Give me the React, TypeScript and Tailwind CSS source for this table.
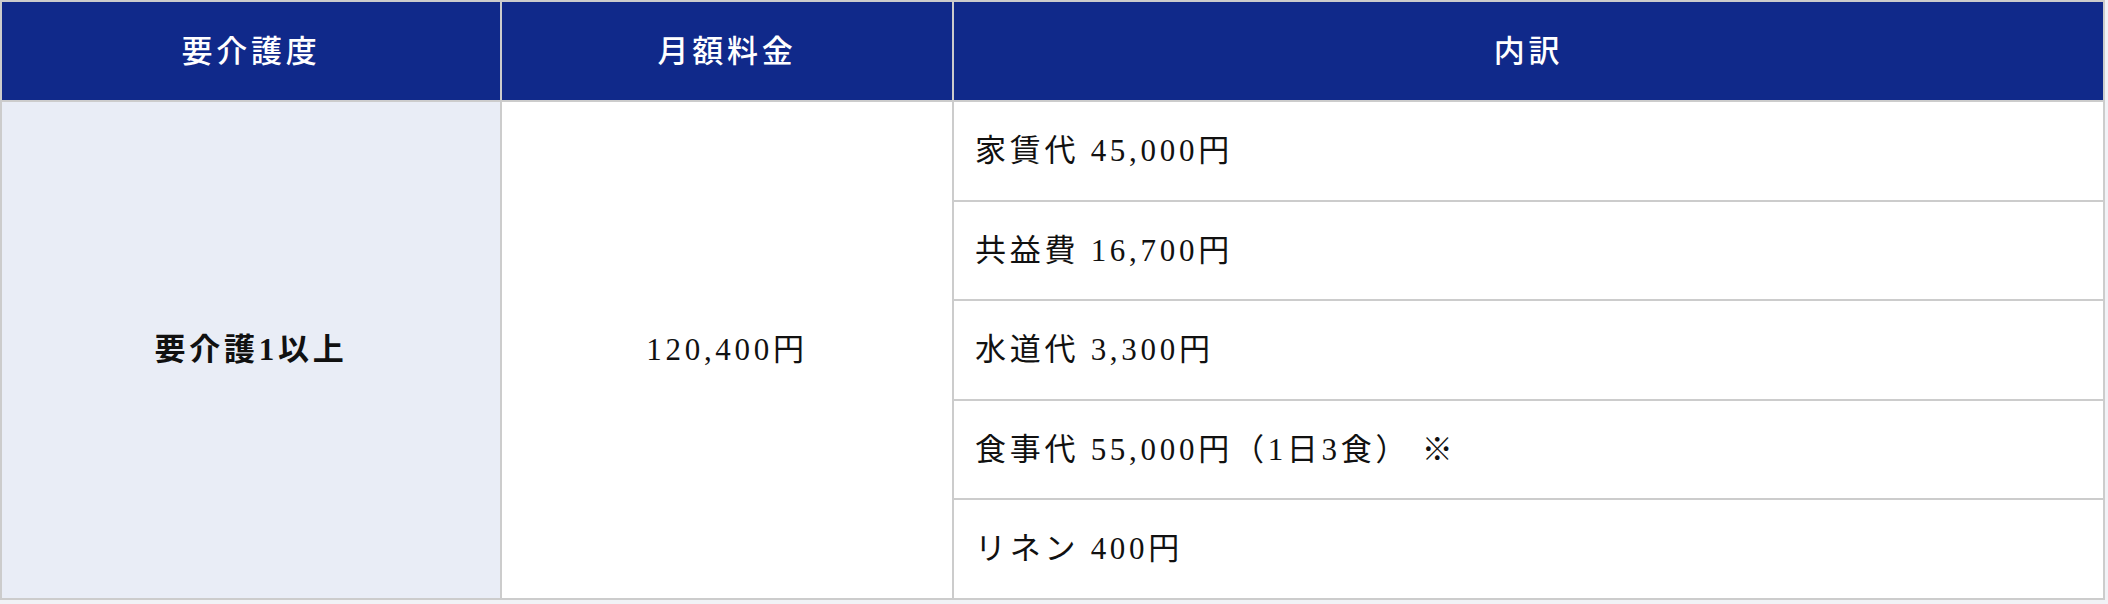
import React from "react";

const font = "font-['Liberation_Serif','Noto_Sans_CJK_JP',serif]";

const items = [
  "家賃代 45,000円",
  "共益費 16,700円",
  "水道代 3,300円",
  "食事代 55,000円（1日3食） ※",
  "リネン 400円",
];

export default function App() {
  return (
    <div className={`w-[2108px] h-[604px] bg-[#f1f2f6] ${font}`}>
      <div className="w-[2105px] grid grid-cols-[498px_450px_1149px] grid-rows-[98px_repeat(5,97.5px)] gap-[2px] p-[2px] bg-[#cccccc] text-[31px] tracking-[0.12em] leading-none">
        <div className="bg-[#10298a] text-white font-medium flex items-center justify-center">要介護度</div>
        <div className="bg-[#10298a] text-white font-medium flex items-center justify-center">月額料金</div>
        <div className="bg-[#10298a] text-white font-medium flex items-center justify-center">内訳</div>
        <div className="row-span-5 bg-[#e9edf6] text-[#111111] font-bold flex items-center justify-center">
          要介護1以上
        </div>
        <div className="row-span-5 bg-white text-[#111111] flex items-center justify-center">120,400円</div>
        {items.map((t) => (
          <div key={t} className="bg-white text-[#111111] flex items-center px-[21px] whitespace-pre">
            {t}
          </div>
        ))}
      </div>
    </div>
  );
}
